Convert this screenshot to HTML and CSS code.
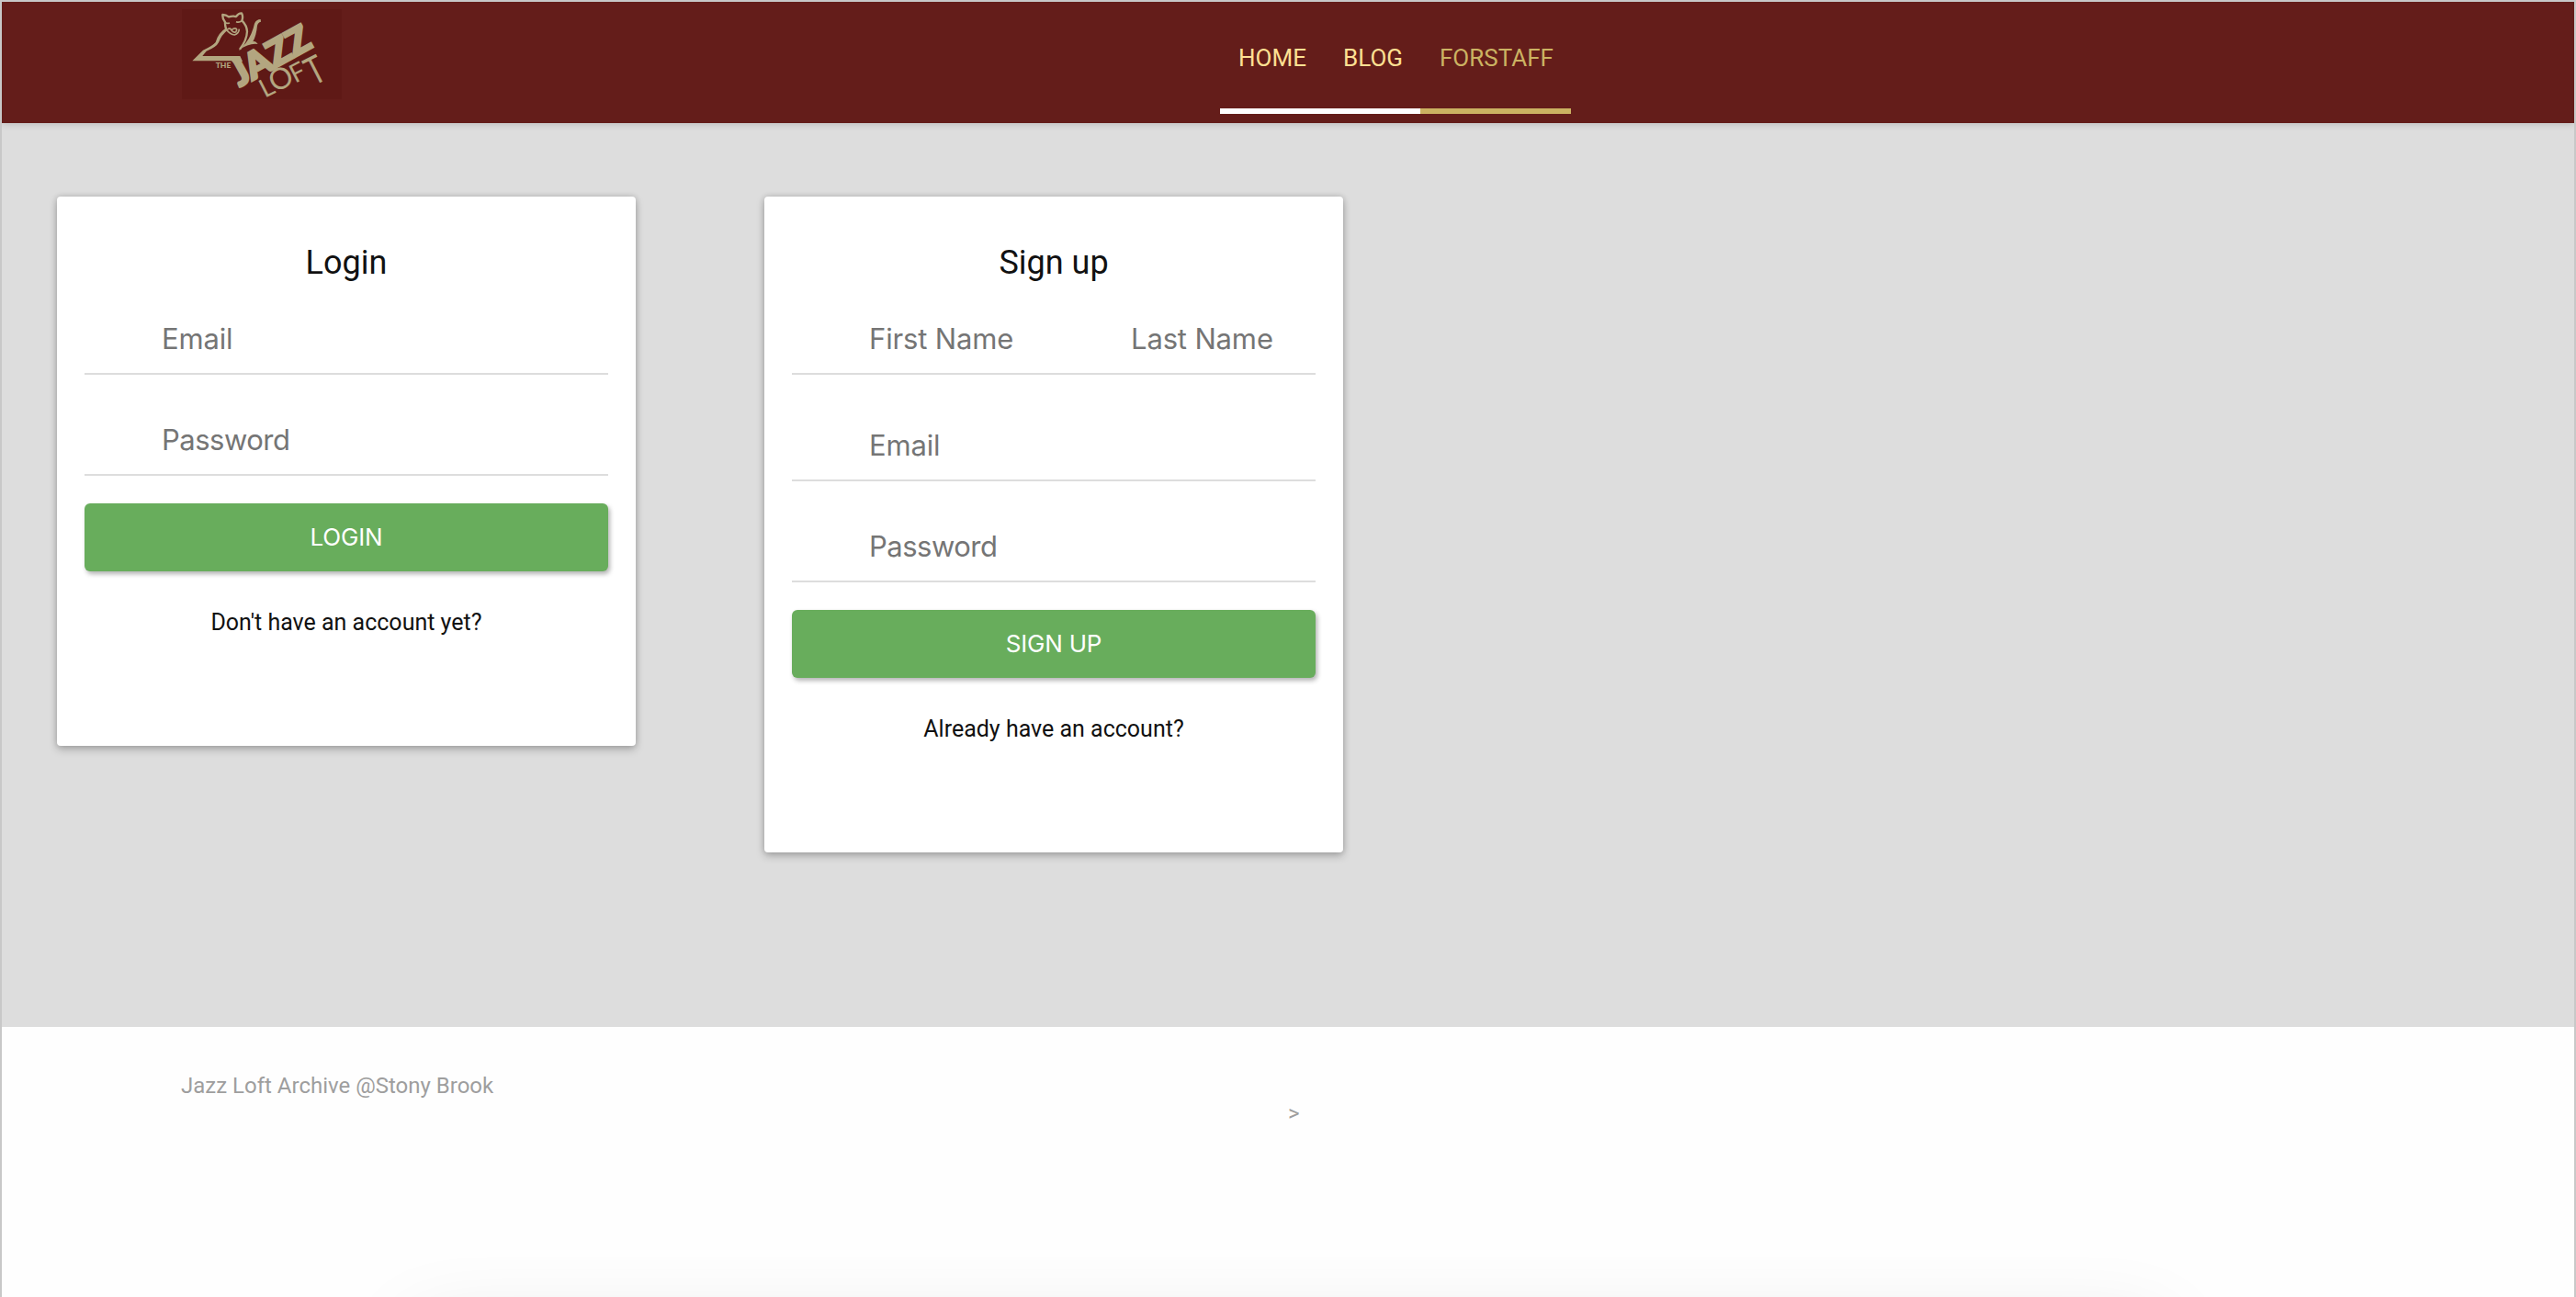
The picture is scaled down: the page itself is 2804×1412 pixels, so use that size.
FILE: index.html
```html
<!DOCTYPE html>
<html lang="en">
<head>
<meta charset="utf-8">
<title>Jazz Loft Archive</title>
<link rel="stylesheet" href="styles.css">
</head>
<body>
<header class="header">
  <svg class="logo" viewBox="54 30 522 294" role="img" aria-label="The Jazz Loft">
    <g class="logo-cat">
      <path class="logo-fill" d="M88 199 L123 164 Q154 150 164 138 Q172 108 199 91 L204 98 Q184 112 174 139 Q166 155 134 167 L121 183 H244 L252 200 L228 210 L216 199 Z"/>
      <path class="logo-line" d="M199 97 Q194 82 195 72 Q186 62 187 48 Q198 48 207 55 Q220 51 231 54 Q240 42 249 43 Q255 54 250 67 Q266 83 267 103 Q266 132 243 161"/>
      <path class="logo-line logo-face" d="M199 96 Q211 113 226 114 Q240 110 241 95 M195 73 Q203 78 210 75 M231 71 Q242 75 249 68 M203 95 Q212 90 216 99 Q222 108 230 104 Q236 97 230 93 Q222 92 217 98"/>
      <path class="logo-fill" d="M240 162 Q266 143 280 111 Q288 92 291 77 Q297 63 311 63 L312 71 Q302 73 300 84 Q297 116 286 136 Q294 132 302 144 Q273 140 240 164 Z"/>
    </g>
    <text class="logo-heavy" font-size="116" transform="translate(242 284) rotate(-29)">J</text>
    <text class="logo-heavy" font-size="118" textLength="230" lengthAdjust="spacingAndGlyphs" transform="translate(284 263) rotate(-29)">AZZ</text>
    <text class="logo-bold" x="164" y="222" font-size="24" textLength="50" lengthAdjust="spacingAndGlyphs">THE</text>
    <text class="logo-thin" font-size="84" transform="translate(325 321) rotate(-27)">L</text>
    <text class="logo-thin" font-size="96" transform="translate(358 304) rotate(-27)">O</text>
    <text class="logo-thin" font-size="84" transform="translate(424 273) rotate(-27)">F</text>
    <text class="logo-thin" font-size="126" textLength="56" lengthAdjust="spacingAndGlyphs" transform="translate(484 281) rotate(-27)">T</text>
  </svg>
  <nav class="nav">
    <a class="nav-link">HOME</a>
    <a class="nav-link">BLOG</a>
    <a class="nav-link nav-link-staff">FORSTAFF</a>
  </nav>
</header>
<main class="main">
  <form class="card">
    <h1 class="card-title">Login</h1>
    <div class="field"><input class="input" type="email" placeholder="Email"></div>
    <div class="field"><input class="input input-password" type="password" placeholder="Password"></div>
    <button class="button" type="button">LOGIN</button>
    <p class="card-note">Don't have an account yet?</p>
  </form>
  <form class="card">
    <h1 class="card-title">Sign up</h1>
    <div class="field field-names"><input class="input" placeholder="First Name"><input class="input" placeholder="Last Name"></div>
    <div class="field"><input class="input" type="email" placeholder="Email"></div>
    <div class="field"><input class="input input-password" type="password" placeholder="Password"></div>
    <button class="button" type="button">SIGN UP</button>
    <p class="card-note">Already have an account?</p>
  </form>
</main>
<footer class="footer">
  <span class="footer-name">Jazz Loft Archive @Stony Brook</span>
  <span class="footer-mark">&gt;</span>
</footer>
</body>
</html>
```

FILE: styles.css
```css
* { box-sizing: border-box; }

html { overflow: hidden; }

body {
  display: flex;
  flex-direction: column;
  width: 2804px;
  height: 1412px;
  margin: 0;
  overflow: hidden;
  border: 2px solid #c8c8c8;
  border-bottom: 0;
  background: #fefefe;
  font-family: Roboto, "Liberation Sans", sans-serif;
}

.header {
  display: flex;
  flex: none;
  position: relative;
  z-index: 1;
  height: 132px;
  padding: 8px 0 0 196px;
  background: #641d1a;
  box-shadow: 0 1px 8px rgba(0, 0, 0, 0.16);
}

.logo {
  width: 174px;
  height: 98px;
  overflow: visible;
  background: #5f1916;
}

.logo-fill,
.logo text { fill: #b3a680; }

.logo-line {
  fill: none;
  stroke: #b3a680;
  stroke-width: 7;
  stroke-linejoin: round;
}

.logo-face { stroke-width: 5; }

.logo text { font-family: Lato, "Open Sans", sans-serif; }

.logo .logo-heavy {
  font-weight: 900;
  stroke: #b3a680;
  stroke-width: 8;
}

.logo .logo-bold { font-weight: 900; }
.logo .logo-thin { font-weight: 400; }

.nav {
  display: flex;
  height: 114px;
  margin-left: 956px;
}

.nav-link {
  width: 113px;
  padding: 35px 0 0 20px;
  border-bottom: 6px solid #fff;
  color: #ffe093;
  font-size: 26px;
  line-height: 36px;
}

.nav-link + .nav-link {
  width: 105px;
  padding-left: 21px;
}

.nav-link + .nav-link-staff {
  width: 164px;
  border-color: #cbb262;
  color: #cbb262;
}

.main {
  display: flex;
  flex: none;
  align-items: flex-start;
  gap: 140px;
  height: 984px;
  padding: 80px 60px 0;
  background: #ddd;
}

.card {
  display: flex;
  flex-direction: column;
  width: 630px;
  padding: 47px 30px 116px;
  border-radius: 4px;
  background: #fff;
  box-shadow: 0 4px 10px rgba(0, 0, 0, 0.22), 0 0 6px rgba(0, 0, 0, 0.16);
}

.card-title {
  margin: 0 0 13px;
  color: #111;
  font-size: 36px;
  font-weight: 400;
  line-height: 50px;
  text-align: center;
}

.field {
  display: flex;
  height: 84px;
  border-bottom: 2px solid #ddd;
}

.field + .field { margin-top: 26px; }
.field-names + .field { margin-top: 32px; }

.input {
  flex: 1;
  min-width: 0;
  margin: 0;
  padding: 6px 0 0 84px;
  border: 0;
  background: none;
  color: #111;
  font: 31px Inter, "Liberation Sans", sans-serif;
  letter-spacing: -0.15px;
}

.input-password { letter-spacing: -0.5px; }

.input::placeholder { color: #757575; }

.button {
  height: 74px;
  margin-top: 30px;
  padding: 0 0 2px;
  border: 0;
  border-radius: 6px;
  background: #68ad5c;
  box-shadow: 2px 3px 5px rgba(0, 0, 0, 0.3);
  color: #fff;
  font: 26px Inter, "Liberation Sans", sans-serif;
  letter-spacing: -0.2px;
}

.card-note {
  margin: 38px 0 0;
  color: #111;
  font-size: 25px;
  line-height: 36px;
  text-align: center;
}

.footer {
  display: flex;
  position: relative;
  flex: 1;
  padding: 44px 0 0 195px;
  overflow: hidden;
  color: #9e9e9e;
  font-size: 24px;
  line-height: 40px;
}

.footer::after {
  content: "";
  position: absolute;
  bottom: -98px;
  left: 450px;
  width: 1900px;
  height: 60px;
  box-shadow: 0 0 90px rgba(0, 0, 0, 0.13);
}

.footer-name { width: 1205px; }
.footer-mark { padding-top: 30px; }
```
